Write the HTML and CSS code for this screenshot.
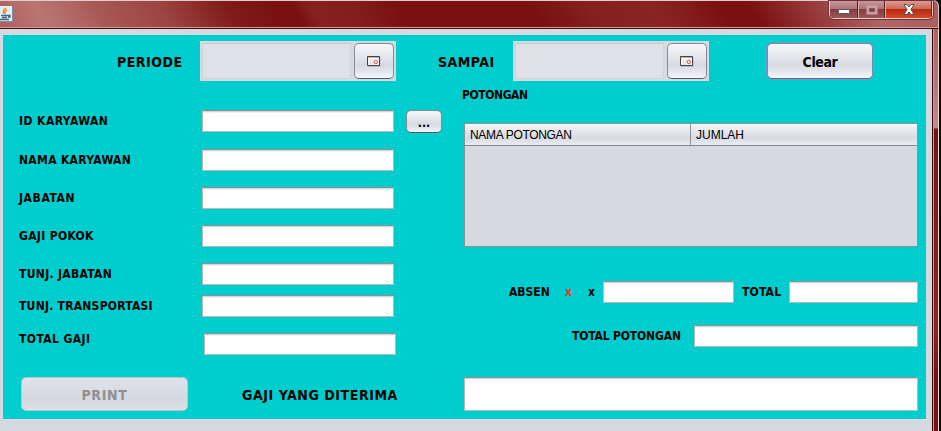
FILE: index.html
```html
<!DOCTYPE html>
<html lang="id">
<head>
<meta charset="utf-8">
<title>Gaji Karyawan</title>
<link rel="stylesheet" href="styles.css">
</head>
<body>
<header class="titlebar">
  <svg class="java" width="13" height="16" viewBox="0 0 13 16">
    <path fill="#e6edf2" d="M0 0h12v15H0z"/><path fill="#7b8f9f" d="M12 0h1v16H0v-1h12z"/>
    <path d="M6 2Q2 5 4 7.500M7 4Q3.500 6 5.500 8" fill="none" stroke="#e8862e" stroke-width="1.500"/>
    <path d="M1 9.500h7M2 11.500h5M0 13.500h9M8 9.500h2v1.500H8" fill="none" stroke="#3f6683" stroke-width="1.400"/>
  </svg>
  <div class="controls">
    <span class="ctl min"><svg width="12" height="6"><rect x=".5" y=".5" width="11" height="4" rx="1" fill="#fff" stroke="#54545e"/></svg></span>
    <span class="ctl max"><svg width="12" height="10"><path d="M2 2h8v6H2z" fill="none" stroke="#c8a0a2" stroke-width="3"/><path d="M3.500 3.500h5v3h-5z" fill="none" stroke="#8b5358"/></svg></span>
    <span class="ctl close"><svg width="12" height="11" viewBox="0 0 12 11"><path d="M1 .5h3l2 2.500 2-2.500h3L8 5.500l3 5H8L6 8l-2 2.500H1l3-5z" fill="#fff" stroke="#4d4c58"/></svg></span>
  </div>
</header>
<div class="frame">
<main class="panel">
  <section class="filters">
    <label class="big periode">PERIODE</label>
    <div class="picker"><div class="date"></div><button class="btn cal"><svg width="14" height="11"><path d="M1 10.500h13V2" fill="none" stroke="#b9b9bd"/><path d="M.5.500h12v9H.5z" fill="#f5f4f4" stroke="#463f43"/><path d="M1 1h5v1H1z" fill="#e8b65c"/><path d="M6 1h6v1H6z" fill="#9fb8dc"/><path d="M3.500 4v5M5.500 4v5" stroke="#ddd"/><circle cx="8.800" cy="6" r="1.700" fill="none" stroke="#e0524e"/></svg></button></div>
    <label class="big sampai">SAMPAI</label>
    <div class="picker"><div class="date"></div><button class="btn cal"><svg width="14" height="11"><path d="M1 10.500h13V2" fill="none" stroke="#b9b9bd"/><path d="M.5.500h12v9H.5z" fill="#f5f4f4" stroke="#463f43"/><path d="M1 1h5v1H1z" fill="#e8b65c"/><path d="M6 1h6v1H6z" fill="#9fb8dc"/><path d="M3.500 4v5M5.500 4v5" stroke="#ddd"/><circle cx="8.800" cy="6" r="1.700" fill="none" stroke="#e0524e"/></svg></button></div>
    <button class="btn clear">Clear</button>
  </section>
  <div class="columns">
    <section class="left">
      <div class="row first"><label>ID KARYAWAN</label><div class="field"></div><button class="btn dots">...</button></div>
      <div class="row second"><label class="nama">NAMA KARYAWAN</label><div class="field"></div></div>
      <div class="row"><label class="jabatan">JABATAN</label><div class="field"></div></div>
      <div class="row"><label>GAJI POKOK</label><div class="field"></div></div>
      <div class="row"><label>TUNJ. JABATAN</label><div class="field"></div></div>
      <div class="row tight"><label>TUNJ. TRANSPORTASI</label><div class="field"></div></div>
      <div class="row total"><label>TOTAL GAJI</label><div class="field"></div></div>
    </section>
    <section class="right">
      <label class="caption">POTONGAN</label>
      <div class="table"><div class="thead"><span>NAMA POTONGAN</span><span>JUMLAH</span></div></div>
      <div class="line absen"><label class="l-absen">ABSEN</label><label class="red">x</label><label class="times">x</label><div class="field f1"></div><label class="l-total">TOTAL</label><div class="field f2"></div></div>
      <div class="line sum"><label>TOTAL POTONGAN</label><div class="field f3"></div></div>
    </section>
  </div>
  <footer class="bottom">
    <button class="btn print" disabled>PRINT</button>
    <label class="big gaji">GAJI YANG DITERIMA</label>
    <div class="field f4"></div>
  </footer>
</main>
<div class="edge"></div>
</div>
</body>
</html>
```
FILE: styles.css
```css
* { box-sizing: border-box; }
body { margin: 0; width: 941px; height: 431px; overflow: hidden; background: #0b0808; font: bold 12px/16px "DejaVu Sans Condensed", "DejaVu Sans", sans-serif; font-stretch: condensed; color: #000; }
.titlebar { height: 29px; width: 939px; display: flex; justify-content: space-between; border-top: 1px solid #ddd0c9; border-bottom: 1px solid #420b14; border-right: 1px solid #dfc5c1; border-top-right-radius: 6px; box-shadow: inset 0 -1px #d59a98; background: linear-gradient(60deg, #ad5e5a 0, #b97571 5%, #b06663 9%, #a95955 11%, #9c4542 18%, #811b1b 25%, #791111 30%, #7a1111 32%, #872121 34%, #841d1d 38%, #791111 43%, #791111 57%, #842020 63%, #8a2424 70%, #7a1111 77%, #7a1111 80%, #963637 86%, #ae6666 93%, #aa5c5c 100%); }
.java { margin-top: 5px; }
.controls { display: flex; height: 18px; width: 104px; margin-right: 5px; border: 1px solid #edcfc9; border-top: 0; border-radius: 0 0 5px 5px; background: #4d1920; overflow: hidden; box-shadow: 0 0 0 1px #72313a; }
.ctl { display: flex; justify-content: center; align-items: center; border-right: 1px solid #d9aaa8; box-shadow: inset -1px 0 #5a252a; background: linear-gradient(#c79698 0, #ad7376 46%, #803d42 50%, #9c5659 100%); }
.min { width: 29px; padding-top: 4px; }
.max { width: 27px; }
.close { flex: 1; border: 0; background: linear-gradient(#dc9b8e 0, #cb6956 46%, #b82a13 50%, #d44b25 100%); }
.frame { display: flex; height: 402px; }
.panel { width: 932px; background: #00cdcd; border: solid #d6d9e0; border-width: 6px 6px 12px 3px; padding: 6px 0 0; }
.edge { width: 7px; border-left: 1px solid #3b0911; border-right: 1px solid #ead8d4; box-shadow: inset 1px 0 #cf9794; background: linear-gradient(#ad6260 0, #b97572 55px, #c58b86 99px, #751313 100px, #801b1b 190px, #8b2424 300px, #731010 350px, #7b1414 100%); }
label { white-space: nowrap; }
.filters { display: flex; height: 40px; align-items: center; }
.big { font-size: 14px; line-height: 18px; padding-top: 2px; letter-spacing: .5px; }
.periode { width: 83px; margin-left: 114px; }
.sampai { width: 75px; margin-left: 42px; }
.picker { width: 196px; height: 40px; padding: 2px; display: flex; justify-content: space-between; background: #d6d9e0; }
.date { width: 149px; height: 36px; background: #dee1e6; border: 1px solid #cfd2d8; border-top-color: #c6c9ce; }
.btn { border: 1px solid #858990; border-bottom-color: #555a61; border-radius: 5px; padding: 0; font: inherit; color: #000; background: linear-gradient(#f6f7f9 0, #e5e7ec 35%, #d7dae1 62%, #dfe2e8 76%, #f3f6fb 100%); display: flex; align-items: center; justify-content: center; }
.cal { width: 40px; height: 36px; padding-top: 1px; }
.clear { width: 106px; height: 36px; margin: 0 0 1px 58px; padding-top: 2px; font-size: 14px; letter-spacing: -.4px; border-color: #7289b4; border-bottom-color: #5d6780; box-shadow: 0 0 0 1px #719dcb; }
.columns { display: flex; height: 296px; }
.left { width: 459px; padding-top: 29px; }
.row { display: flex; height: 22px; margin-top: 16px; padding-left: 16px; align-items: center; }
.row label { width: 183px; letter-spacing: .33px; }
.row.first { margin-top: 0; }
.row.first label { letter-spacing: .45px; }
.row .jabatan { letter-spacing: .6px; }
.row.second { margin-top: 17px; }
.row.tight { margin-top: 10px; }
.row.tight label { letter-spacing: .25px; }
.row.total label { width: 185px; margin-bottom: 10px; letter-spacing: .42px; }
.field { width: 192px; height: 22px; background: #fff; border: 1px solid #bab8b6; border-top-color: #8e8e8e; box-shadow: inset 0 1px #d5d5d8, inset 0 2px #f3f3f3; }
.dots { width: 36px; height: 23px; margin: 1px 0 0 12px; padding-top: 2px; font-size: 12px; }
.right { width: 456px; display: flex; flex-direction: column; }
.caption { margin-top: 6px; height: 16px; letter-spacing: -.4px; }
.table { height: 124px; margin: 20px 0 0 2px; width: 454px; background: #d6d9e0; border: 1px solid #8d9095; }
.thead { height: 22px; display: flex; font: 12px/22px "Liberation Sans", Arial, sans-serif; background: linear-gradient(#f7f7f9 0, #e3e5ea 40%, #d6d9e0 65%, #e9ecf1 100%); border-bottom: 1px solid #85888e; }
.thead span { flex: 1; padding-left: 5px; }
.thead span:first-child { flex: 0 0 226px; border-right: 1px solid #8d9095; letter-spacing: -.32px; }
.line { height: 22px; display: flex; align-items: center; margin-top: 34px; }
.l-absen { margin-left: 47px; width: 56px; }
.red { width: 23px; color: #ff2c2c; }
.times { width: 15px; }
.f1 { width: 131px; }
.l-total { margin-left: 8px; width: 47px; letter-spacing: .2px; }
.f2 { width: 129px; }
.sum { margin-top: 22px; padding-left: 110px; }
.sum label { width: 122px; letter-spacing: -.15px; }
.f3 { width: 224px; }
.bottom { display: flex; height: 34px; align-items: center; margin-left: 18px; }
.print { width: 167px; height: 34px; padding-top: 2px; font-size: 14px; letter-spacing: .7px; color: #8e8f93; border: 1px solid #c0c3ca; background: linear-gradient(#e0e3e8, #d5d8df 60%, #dcdfe6); }
.gaji { margin-left: 54px; width: 222px; letter-spacing: .57px; }
.f4 { width: 454px; height: 34px; }
```
